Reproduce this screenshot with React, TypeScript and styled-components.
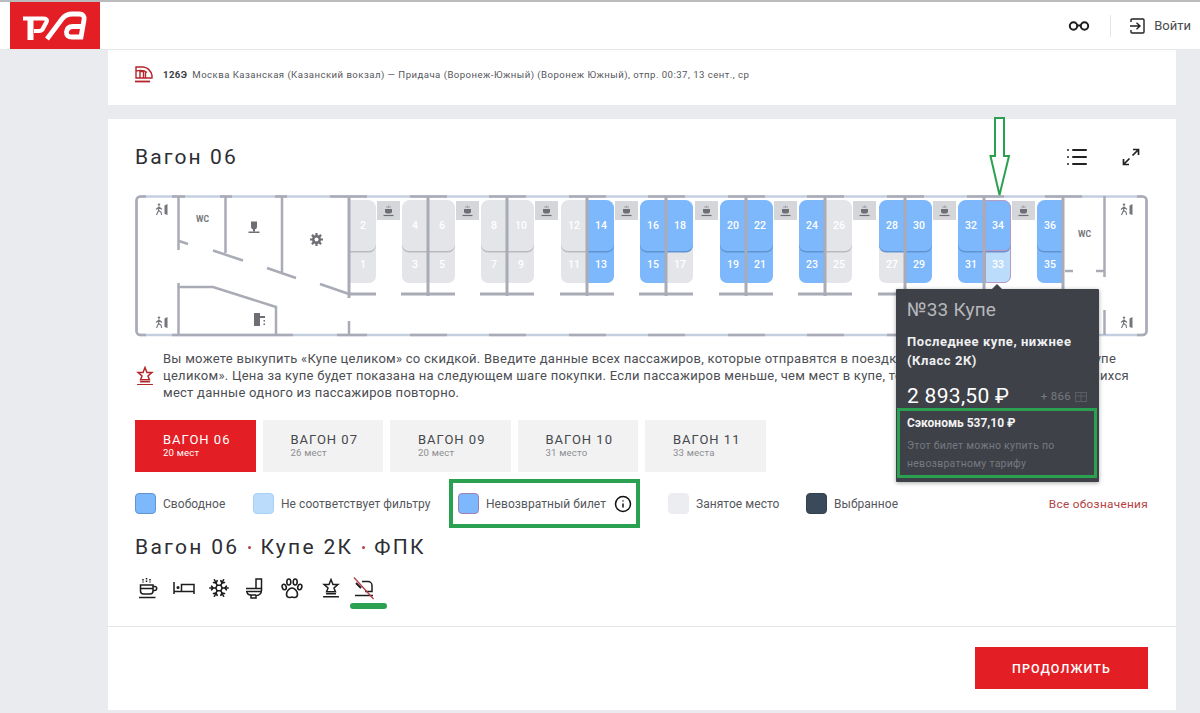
import { Fragment } from 'react'
import styled, { createGlobalStyle } from 'styled-components'
import { Info, List, Snowflake } from 'lucide-react'

const RED = '#e31e24'
const BLUE = '#7cb8fb'
const GREEN = '#2aa150'
const WALL = '#a9abb6'
const RAIL = '#c3cfdf'

type SeatKind = 'free' | 'busy' | 'nonret' | 'light'
type SeatData = { num: number; kind: SeatKind }
type Bay = {
  wall: number
  left?: [SeatData, SeatData]
  right?: [SeatData, SeatData]
}

const s = (num: number, kind: SeatKind): SeatData => ({ num, kind })

const bays: Bay[] = [
  { wall: 349, right: [s(2, 'busy'), s(1, 'busy')] },
  { wall: 428, left: [s(4, 'busy'), s(3, 'busy')], right: [s(6, 'busy'), s(5, 'busy')] },
  { wall: 507, left: [s(8, 'busy'), s(7, 'busy')], right: [s(10, 'busy'), s(9, 'busy')] },
  { wall: 587, left: [s(12, 'busy'), s(11, 'busy')], right: [s(14, 'free'), s(13, 'free')] },
  { wall: 666, left: [s(16, 'free'), s(15, 'free')], right: [s(18, 'free'), s(17, 'busy')] },
  { wall: 746, left: [s(20, 'free'), s(19, 'free')], right: [s(22, 'free'), s(21, 'free')] },
  { wall: 825, left: [s(24, 'free'), s(23, 'free')], right: [s(26, 'busy'), s(25, 'busy')] },
  { wall: 905, left: [s(28, 'free'), s(27, 'busy')], right: [s(30, 'free'), s(29, 'free')] },
  { wall: 984, left: [s(32, 'free'), s(31, 'free')], right: [s(34, 'nonret'), s(33, 'light')] },
  { wall: 1063, left: [s(36, 'free'), s(35, 'free')] },
]

const coffeeSpots = [377, 456, 535, 615, 695, 774, 853, 933, 1012]
const railSegments = [330, 410, 489, 569, 648, 728, 807, 887, 967, 1045]

const tabs = [
  { title: 'ВАГОН 06', sub: '20 мест', active: true },
  { title: 'ВАГОН 07', sub: '26 мест' },
  { title: 'ВАГОН 09', sub: '20 мест' },
  { title: 'ВАГОН 10', sub: '31 место' },
  { title: 'ВАГОН 11', sub: '33 места' },
]

const GlobalStyle = createGlobalStyle`
  html, body {
    margin: 0;
    padding: 0;
    height: 713px;
    overflow: hidden;
    background: #e9ebee;
    font-family: Roboto, "Liberation Sans", sans-serif;
    color: #45474c;
  }
  * { box-sizing: border-box; }
`

const Page = styled.div`
  width: 1200px;
  height: 713px;
  display: flex;
  flex-direction: column;
  border-top: 2px solid #b9bbbd;
`

const Header = styled.header`
  height: 48px;
  flex: none;
  display: flex;
  align-items: stretch;
  justify-content: space-between;
  background: #fff;
  border-bottom: 1px solid #e6e7e9;
  padding-left: 10px;
`

const Logo = styled.div`
  width: 90px;
  height: 47px;
  background: ${RED};
  svg { display: block; }
`

const HeaderTools = styled.div`
  display: flex;
  align-items: center;
  padding-right: 9px;
`

const ToolDivider = styled.span`
  width: 1px;
  height: 22px;
  background: #e4e5e7;
  margin: 0 19px 0 20px;
`

const LoginLabel = styled.span`
  font-size: 13px;
  color: #4a4c50;
  margin-left: 9px;
`

const Main = styled.main`
  width: 1068px;
  margin-left: 108px;
  display: flex;
  flex-direction: column;
  gap: 14px;
`

const RouteCard = styled.section`
  height: 55px;
  background: #fff;
  padding: 0 27px 6px;
  display: flex;
  align-items: center;
  gap: 10px;
  font-size: 9.6px;
  letter-spacing: 0.46px;
  color: #55575c;
  white-space: nowrap;
`

const TrainNumber = styled.b`
  font-weight: 700;
  margin-right: 5px;
  letter-spacing: 0.4px;
  color: #3b3d42;
`

const WagonCard = styled.section`
  height: 591px;
  background: #fff;
  display: flex;
  flex-direction: column;
`

const CardBody = styled.div`
  flex: 1;
  padding: 0 28px 0 27px;
`

const TitleRow = styled.div`
  height: 76px;
  display: flex;
  align-items: center;
  justify-content: space-between;
  padding: 0 8px 0 0;
`

const Title = styled.h1`
  margin: 0;
  font-size: 21px;
  font-weight: 400;
  letter-spacing: 2.1px;
  color: #2c2e33;
`

const TitleTools = styled.div`
  display: flex;
  align-items: center;
  gap: 33px;
  color: #222;
`

const Diagram = styled.div`
  position: relative;
  width: 1013px;
  height: 142px;
`

const Walls = styled.svg`
  position: absolute;
  left: 0;
  top: 0;
  z-index: 2;
`

const seatBg: Record<SeatKind, string> = {
  free: BLUE,
  busy: '#e4e5e8',
  nonret: BLUE,
  light: '#bcdcfb',
}

const seatEdge: Record<SeatKind, string> = {
  free: '#5f94d2',
  busy: '#b9bac0',
  nonret: '#6f8fc9',
  light: '#a8c6e8',
}

const Seat = styled.div<{ $x: number; $upper: boolean; $side: 'l' | 'r'; $kind: SeatKind }>`
  position: absolute;
  left: ${p => p.$x - 135}px;
  top: ${p => (p.$upper ? 5 : 46)}px;
  width: 26px;
  height: ${p => (p.$upper ? 51 : 42)}px;
  z-index: ${p => (p.$upper ? 1 : 0)};
  background: ${p => seatBg[p.$kind]};
  color: #fff;
  font-size: 10.5px;
  font-weight: 500;
  display: flex;
  align-items: center;
  justify-content: center;
  padding-top: ${p => (p.$upper ? 0 : 10)}px;
  padding-bottom: ${p => (p.$upper ? 0 : 5)}px;
  border-radius: ${p => {
    if (p.$upper) return p.$side === 'l' ? '8px 0 0 7px' : '0 8px 7px 0'
    return p.$side === 'l' ? '0 0 0 7px' : '0 0 7px 0'
  }};
  box-shadow: ${p => (p.$upper ? `0 1.5px 0 ${seatEdge[p.$kind]}` : 'none')};
  ${p => (p.$kind === 'nonret' || p.$kind === 'light' ? 'outline: 1px solid #b79ac6; outline-offset: -1px;' : '')}
`

const CoffeeBox = styled.div<{ $x: number }>`
  position: absolute;
  left: ${p => p.$x - 135}px;
  top: 6px;
  width: 23px;
  height: 19px;
  background: #d4d6da;
  display: flex;
  align-items: center;
  justify-content: center;
`

const WcLabel = styled.span<{ $x: number; $y: number }>`
  position: absolute;
  left: ${p => p.$x - 135}px;
  top: ${p => p.$y - 195}px;
  font-size: 8.5px;
  font-weight: 700;
  line-height: 10px;
  color: #74767c;
  z-index: 2;
`

const PlacedIcon = styled.svg<{ $x: number; $y: number }>`
  position: absolute;
  left: ${p => p.$x - 135}px;
  top: ${p => p.$y - 195}px;
  z-index: 2;
`

const GreenArrow = styled.svg`
  position: absolute;
  left: 854px;
  top: -78px;
  z-index: 5;
`

const Tooltip = styled.div`
  position: absolute;
  left: 761px;
  top: 94px;
  width: 203px;
  height: 193px;
  background: #3e4148;
  box-shadow: 0 1px 4px rgba(0, 0, 0, 0.35);
  border-radius: 1px;
  padding: 9px 2px 0 1px;
  color: #fff;
  z-index: 6;
  &::before {
    content: '';
    position: absolute;
    left: 96px;
    top: -5px;
    border-left: 5px solid transparent;
    border-right: 5px solid transparent;
    border-bottom: 5px solid #3e4148;
  }
`

const TipHead = styled.div`
  font-size: 19px;
  line-height: 24px;
  color: #b6b8bc;
  padding-left: 10px;
  letter-spacing: 0.2px;
`

const TipPlace = styled.div`
  margin-top: 10px;
  padding-left: 10px;
  font-size: 13px;
  font-weight: 700;
  line-height: 19px;
  letter-spacing: 0.55px;
  color: #eeeff0;
`

const TipPriceRow = styled.div`
  margin-top: 14px;
  height: 24px;
  padding: 0 10px;
  display: flex;
  align-items: center;
  justify-content: space-between;
`

const TipPrice = styled.span`
  font-size: 21px;
  letter-spacing: 0.3px;
  color: #fff;
`

const TipBonus = styled.span`
  display: flex;
  align-items: center;
  gap: 4px;
  font-size: 11.5px;
  letter-spacing: 0.3px;
  color: #777a80;
`

const TipSave = styled.div`
  height: 70px;
  border: 3px solid ${GREEN};
  padding: 3px 7px 0;
`

const TipSaveTitle = styled.div`
  font-size: 12px;
  font-weight: 700;
  line-height: 18px;
  color: #f2f2f3;
`

const TipSaveText = styled.div`
  margin-top: 5px;
  font-size: 10.5px;
  line-height: 17.5px;
  letter-spacing: 0.25px;
  color: #777a80;
`

const Notice = styled.div`
  margin-top: 13px;
  display: flex;
  align-items: center;
  gap: 9px;
  padding-left: 1px;
`

const NoticeText = styled.p`
  margin: 0;
  width: 970px;
  font-size: 13px;
  line-height: 17px;
  letter-spacing: 0.26px;
  color: #4c4e53;
  white-space: nowrap;
`

const Tabs = styled.div`
  margin-top: 19px;
  display: flex;
  gap: 7px;
`

const Tab = styled.div<{ $active?: boolean }>`
  width: 120.5px;
  height: 52px;
  padding: 13px 0 0 28px;
  background: ${p => (p.$active ? RED : '#f2f2f2')};
  color: ${p => (p.$active ? '#fff' : '#45474c')};
`

const TabTitle = styled.div`
  font-size: 13px;
  line-height: 14px;
  letter-spacing: 1px;
`

const TabSub = styled.div<{ $active?: boolean }>`
  font-size: 9.6px;
  line-height: 12px;
  letter-spacing: 0.2px;
  color: ${p => (p.$active ? '#fff' : '#8b8d91')};
`

const Legend = styled.div`
  margin-top: 7px;
  height: 49px;
  display: flex;
  align-items: center;
  font-size: 12px;
  letter-spacing: 0.05px;
  color: #55575c;
  white-space: nowrap;
`

const LegendItem = styled.div<{ $width?: number; $before?: number }>`
  display: flex;
  align-items: center;
  gap: 7px;
  width: ${p => (p.$width ? `${p.$width}px` : 'auto')};
  margin-left: ${p => p.$before ?? 0}px;
  flex: none;
`

const LegendFrame = styled(LegendItem)`
  height: 49px;
  width: 191px;
  border: 4px solid ${GREEN};
  padding-left: 5px;
`

const Swatch = styled.span<{ $bg: string; $edge: string }>`
  width: 21px;
  height: 21px;
  flex: none;
  border-radius: 4px;
  background: ${p => p.$bg};
  border: 1px solid ${p => p.$edge};
`

const LegendLink = styled.span`
  margin-left: auto;
  font-size: 11.8px;
  letter-spacing: 0.3px;
  color: #b3413f;
`

const InfoMark = styled.span`
  display: flex;
  margin-left: 1px;
  color: #111;
`

const SubTitle = styled.h2`
  margin: 5px 0 0;
  font-size: 21px;
  line-height: 28px;
  font-weight: 400;
  letter-spacing: 2.3px;
  color: #2c2e33;
  display: flex;
  gap: 9px;
  align-items: center;
`

const Dot = styled.span`
  width: 3px;
  height: 3px;
  border-radius: 50%;
  background: #b3413f;
`

const Facilities = styled.div`
  margin-top: 14px;
  height: 26px;
  display: flex;
  align-items: center;
  padding-left: 3px;
  color: #1d1d1f;
  position: relative;
`

const FacilitySlot = styled.span<{ $width: number }>`
  width: ${p => p.$width}px;
  flex: none;
  display: flex;
`

const Underline = styled.span`
  position: absolute;
  left: 215px;
  top: 28px;
  width: 37px;
  height: 6px;
  border-radius: 3px;
  background: ${GREEN};
`

const Footer = styled.div`
  height: 84px;
  flex: none;
  border-top: 1px solid #e4e5e7;
  padding: 20px 28px 0 0;
  display: flex;
  justify-content: flex-end;
  align-items: flex-start;
`

const ContinueButton = styled.button`
  width: 173px;
  height: 42px;
  border: none;
  background: ${RED};
  color: #fff;
  font-family: Roboto, sans-serif;
  font-size: 12.5px;
  font-weight: 500;
  letter-spacing: 1.1px;
`

const WalkIcon = ({ x, y }: { x: number; y: number }) => (
  <PlacedIcon $x={x} $y={y} width='13' height='13' viewBox='0 0 13 13' fill='none' stroke='#74767c'>
    <circle cx='4' cy='1.6' r='1.2' fill='#74767c' stroke='none' />
    <path d='M4 3.4 3.5 7.5 1.5 12M3.6 7.5 6 9 6.6 12M4 4 1 6.5M4 4l3 2.5' strokeWidth='1.1' />
    <path d='M9.500 2.500 12.500 1V12L9.500 11z' fill='#74767c' stroke='none' />
  </PlacedIcon>
)

const CoffeeMini = () => (
  <svg width='13' height='12' viewBox='0 0 13 12' fill='none'>
    <path d='M3 4h7v2.4a2 2 0 0 1-2 2H5a2 2 0 0 1-2-2z' fill='#6d6f75' />
    <path d='M1.5 10.5h10' stroke='#6d6f75' strokeWidth='1.2' />
    <path d='M5 1v2M6.5 0.5v2.5M8 1v2' stroke='#8a8c92' strokeWidth='0.7' />
  </svg>
)

const CoffeeIcon = () => (
  <svg width='20' height='22' viewBox='0 0 20 22' fill='none' stroke='currentColor' strokeWidth='1.5'>
    <path d='M2.5 8h12.5v6a3 3 0 0 1-3 3H5.5a3 3 0 0 1-3-3z' />
    <path d='M2.5 11.5h12.5M15 9.5h2a1.7 1.7 0 0 1 1.7 1.7v0A2.3 2.3 0 0 1 16.4 13.500H15' />
    <path d='M1 20.500h16.500' />
    <path d='M5 2v3.500M8.500 1v4.500M12 2v3.500' strokeDasharray='1.500 1' />
  </svg>
)

const BedIcon = () => (
  <svg width='22' height='14' viewBox='0 0 22 14' fill='none' stroke='currentColor' strokeWidth='1.5'>
    <path d='M1 1v12M1 10.500h20M21 13V3.500H8.500v7' />
    <circle cx='5' cy='6.500' r='1.500' fill='currentColor' stroke='none' />
  </svg>
)

const ToiletIcon = () => (
  <svg width='18' height='21' viewBox='0 0 18 21' fill='none' stroke='currentColor' strokeWidth='1.5'>
    <path d='M11 10.500V1h5.500v11.500a5 5 0 0 1-5 5H11V20H6v-3' />
    <path d='M1 10.500h15.500M1 13.500h15M2 13.500c0 2 1.500 3.500 4 3.500h5' />
  </svg>
)

const PawIcon = () => (
  <svg width='22' height='21' viewBox='0 0 22 21' fill='none' stroke='currentColor' strokeWidth='1.6'>
    <ellipse cx='3.200' cy='9' rx='2' ry='2.800' transform='rotate(-15 3.200 9)' />
    <ellipse cx='7.800' cy='4' rx='2' ry='3' />
    <ellipse cx='14.200' cy='4' rx='2' ry='3' />
    <ellipse cx='18.800' cy='9' rx='2' ry='2.800' transform='rotate(15 18.800 9)' />
    <path d='M11 10c-2.600 0-5.500 3.300-5.500 6.200 0 2 1.500 3.300 3.200 3.300 1 0 1.500-.5 2.300-.5s1.300.5 2.300.5c1.700 0 3.200-1.300 3.200-3.300C16.500 13.300 13.600 10 11 10z' />
  </svg>
)

const StarStand = ({ size = 18, color = 'currentColor' }: { size?: number; color?: string }) => (
  <svg width={size} height={size * 1.1} viewBox='0 0 18 20' fill='none' stroke={color} strokeWidth='1.500'>
    <path d='M9 1.500 11 6.500H16L12 10 13.500 14H4.500L6 10 2 6.500H7z' />
    <path d='M4 16h10M1 19h16' />
  </svg>
)

const NoLuggageIcon = () => (
  <svg width='22' height='23' viewBox='0 0 22 23' fill='none' stroke='#1d1d1f' strokeWidth='1.500'>
    <path d='M9 4.500h6a4 4 0 0 1 4 4v6h-7M2 18.500h18' />
    <path d='M3 6l5 5' strokeWidth='2' />
    <path d='M1 0.500 20.500 22' stroke='#b2434c' strokeWidth='1.400' />
  </svg>
)

const ExpandIcon = () => (
  <svg width='18' height='18' viewBox='0 0 18 18' fill='none' stroke='currentColor' strokeWidth='1.700'>
    <path d='M11 1.500h5.500V7M16 2l-5.500 5.500M7 16.500H1.500V11M2 16l5.500-5.500' />
  </svg>
)

const GlassesIcon = () => (
  <svg width='22' height='10' viewBox='0 0 22 10' fill='none' stroke='#1d1d1f' strokeWidth='2'>
    <circle cx='5.500' cy='5' r='3.700' />
    <circle cx='16.500' cy='5' r='3.700' />
    <path d='M9 4.500h4' />
  </svg>
)

const LoginIcon = () => (
  <svg width='15' height='16' viewBox='0 0 15 16' fill='none' stroke='#222' strokeWidth='1.400'>
    <path d='M1 4V2a1 1 0 0 1 1-1h11a1 1 0 0 1 1 1v12a1 1 0 0 1-1 1H2a1 1 0 0 1-1-1v-2' />
    <path d='M0 8h9.500M6.500 4.800 10 8 6.500 11.200' />
  </svg>
)

const TrainIcon = () => (
  <svg width='18' height='17' viewBox='0 0 18 17' fill='none' stroke='#b3262b' strokeWidth='1.400'>
    <path d='M1 12V1h7c4 0 8 3.500 9 8.500V12z' />
    <path d='M5 12V5.500h3.500V12M10.500 12V6.500M1 5c4-1 8-1 11 1.500' />
    <path d='M0 15.500h15' strokeWidth='1.800' />
  </svg>
)

const GiftIcon = () => (
  <svg width='12' height='12' viewBox='0 0 12 12' fill='none' stroke='#5b5e65' strokeWidth='1'>
    <rect x='0.500' y='2.500' width='11' height='9' />
    <path d='M0.500 6h11M6 2.500v9' />
  </svg>
)

const RzdMark = () => (
  <svg width='90' height='47' viewBox='0 0 90 47' fill='none' stroke='#fff'>
    <path d='M13 16.500H33Q38 16.500 36.500 20L33 26.500Q32 29 29 29H24' strokeWidth='4.200' />
    <path d='M20.500 16V38' strokeWidth='6' />
    <path
      d='M37 37 52 17Q56 12 62 12H69Q75 12 74 18L71 35H62Q56 35 56.500 30Q57 24.500 63 24.500H72'
      strokeWidth='4.800'
    />
  </svg>
)

const PlanWalls = () => (
  <Walls width='1013' height='142' viewBox='135 195 1013 142' fill='none' strokeLinecap='butt'>
    <rect x='136.500' y='196.500' width='1010' height='138.500' rx='4' stroke={RAIL} strokeWidth='2.500' />
    <path
      d='M146 196.500H140.500a4 4 0 0 0-4 4V331a4 4 0 0 0 4 4H146M1137 196.500H1142.500a4 4 0 0 1 4 4V331a4 4 0 0 1-4 4H1137'
      stroke={WALL}
      strokeWidth='2.500'
    />
    <g stroke={WALL} strokeWidth='2.500'>
      <path d='M172 196.500h13M220 196.500h12M275 196.500h12M172 335H293M337 335h30' />
      {railSegments.map(x => (
        <Fragment key={x}>
          <path d={`M${x} 196.500h37`} />
          {x > 400 && <path d={`M${x} 335h37`} />}
        </Fragment>
      ))}
      <path d='M178.500 196V250M179 241l9 3M225.500 196V253M213 250.500l30 10M282 196V272M267 268l29 10M320 284l29 10' />
      <path d='M178.500 283V335M179 287H213L276 307V335M349 321V335' />
      <path d='M1104.500 196V277M1065 271h8M1096 271h9M1104.500 310V335' />
    </g>
    <g stroke={WALL} strokeWidth='3'>
      {bays.map(b => (
        <path
          key={b.wall}
          d={`M${b.wall} 196V${b.wall === 349 ? 298 : b.wall === 1063 ? 290 : 296}`}
        />
      ))}
      {bays.slice(1, 9).map(b => (
        <path key={b.wall} d={`M${b.wall - 27} 294h54`} />
      ))}
      <path d='M349 294h27M1036 294h27' />
    </g>
  </Walls>
)

const PlanIcons = () => (
  <>
    <WalkIcon x={155} y={203} />
    <WalkIcon x={155} y={316} />
    <WalkIcon x={1120} y={203} />
    <WalkIcon x={1120} y={316} />
    <WcLabel $x={196} $y={214}>WC</WcLabel>
    <WcLabel $x={1078} $y={229}>WC</WcLabel>
    <PlacedIcon $x={248} $y={221} width='12' height='12' viewBox='0 0 12 12' fill='#6d6f75'>
      <path d='M3 0.500h6v5a3 3 0 0 1-6 0zM0.500 10.500h11V12H0.500z' />
      <path d='M5 8h2v2.500H5z' />
    </PlacedIcon>
    <PlacedIcon $x={310} $y={233} width='13' height='13' viewBox='0 0 13 13' fill='#6d6f75'>
      <path d='M6.500 0v13M0 6.500h13M1.900 1.900l9.200 9.200M11.100 1.900l-9.200 9.200' stroke='#6d6f75' strokeWidth='2.200' />
      <circle cx='6.500' cy='6.500' r='4.500' />
      <circle cx='6.500' cy='6.500' r='2' fill='#fff' />
    </PlacedIcon>
    <PlacedIcon $x={254} $y={313} width='12' height='13' viewBox='0 0 12 13' fill='#6d6f75'>
      <path d='M0 0h6v3h5v2H6v8H0z' />
      <path d='M9.500 7h1.500v1.500H9.500zM9.500 10.500h1.500V12H9.500z' />
    </PlacedIcon>
  </>
)

const renderSeats = (b: Bay) => (
  <Fragment key={b.wall}>
    {b.left && (
      <>
        <Seat $x={b.wall - 26} $upper $side='l' $kind={b.left[0].kind}>{b.left[0].num}</Seat>
        <Seat $x={b.wall - 26} $upper={false} $side='l' $kind={b.left[1].kind}>{b.left[1].num}</Seat>
      </>
    )}
    {b.right && (
      <>
        <Seat $x={b.wall + 1} $upper $side='r' $kind={b.right[0].kind}>{b.right[0].num}</Seat>
        <Seat $x={b.wall + 1} $upper={false} $side='r' $kind={b.right[1].kind}>{b.right[1].num}</Seat>
      </>
    )}
  </Fragment>
)

export default function App() {
  return (
    <Page>
      <GlobalStyle />
      <Header>
        <Logo>
          <RzdMark />
        </Logo>
        <HeaderTools>
          <GlassesIcon />
          <ToolDivider />
          <LoginIcon />
          <LoginLabel>Войти</LoginLabel>
        </HeaderTools>
      </Header>
      <Main>
        <RouteCard>
          <TrainIcon />
          <span>
            <TrainNumber>126Э</TrainNumber>
            Москва Казанская (Казанский вокзал) — Придача (Воронеж-Южный) (Воронеж Южный), отпр. 00:37, 13 сент., ср
          </span>
        </RouteCard>
        <WagonCard>
          <CardBody>
            <TitleRow>
              <Title>Вагон 06</Title>
              <TitleTools>
                <List size={24} strokeWidth={2} />
                <ExpandIcon />
              </TitleTools>
            </TitleRow>
            <Diagram>
              {bays.map(renderSeats)}
              {coffeeSpots.map(x => (
                <CoffeeBox key={x} $x={x}>
                  <CoffeeMini />
                </CoffeeBox>
              ))}
              <PlanWalls />
              <PlanIcons />
              <GreenArrow width='22' height='80' viewBox='0 0 22 80' fill='#fff' stroke={GREEN} strokeWidth='2'>
                <path d='M6 1h9v38h5L10.500 78 1.500 39h4.500z' />
              </GreenArrow>
              <Tooltip>
                <TipHead>№33 Купе</TipHead>
                <TipPlace>
                  Последнее купе, нижнее
                  <br />
                  (Класс 2К)
                </TipPlace>
                <TipPriceRow>
                  <TipPrice>2 893,50 ₽</TipPrice>
                  <TipBonus>
                    + 866
                    <GiftIcon />
                  </TipBonus>
                </TipPriceRow>
                <TipSave>
                  <TipSaveTitle>Сэкономь 537,10 ₽</TipSaveTitle>
                  <TipSaveText>
                    Этот билет можно купить по
                    <br />
                    невозвратному тарифу
                  </TipSaveText>
                </TipSave>
              </Tooltip>
            </Diagram>
            <Notice>
              <StarStand size={18} color='#b3262b' />
              <NoticeText>
                Вы можете выкупить «Купе целиком» со скидкой. Введите данные всех пассажиров, которые отправятся в поездку, а затем выберите вариант «Купе
                <br />
                целиком». Цена за купе будет показана на следующем шаге покупки. Если пассажиров меньше, чем мест в купе, то вы можете ввести для оставшихся
                <br />
                мест данные одного из пассажиров повторно.
              </NoticeText>
            </Notice>
            <Tabs>
              {tabs.map(t => (
                <Tab key={t.title} $active={t.active}>
                  <TabTitle>{t.title}</TabTitle>
                  <TabSub $active={t.active}>{t.sub}</TabSub>
                </Tab>
              ))}
            </Tabs>
            <Legend>
              <LegendItem $width={118}>
                <Swatch $bg={BLUE} $edge='#5f94d2' />
                Свободное
              </LegendItem>
              <LegendItem $width={196}>
                <Swatch $bg='#bcdcfb' $edge='#a8d0f6' />
                Не соответствует фильтру
              </LegendItem>
              <LegendFrame>
                <Swatch $bg={BLUE} $edge='#a080b4' />
                Невозвратный билет
                <InfoMark>
                  <Info size={18} strokeWidth={2} />
                </InfoMark>
              </LegendFrame>
              <LegendItem $width={138} $before={28}>
                <Swatch $bg='#ecedf0' $edge='#ecedf0' />
                Занятое место
              </LegendItem>
              <LegendItem>
                <Swatch $bg='#3b4a5a' $edge='#33404e' />
                Выбранное
              </LegendItem>
              <LegendLink>Все обозначения</LegendLink>
            </Legend>
            <SubTitle>
              Вагон 06
              <Dot />
              Купе 2К
              <Dot />
              ФПК
            </SubTitle>
            <Facilities>
              <FacilitySlot $width={35}><CoffeeIcon /></FacilitySlot>
              <FacilitySlot $width={35}><BedIcon /></FacilitySlot>
              <FacilitySlot $width={37}><Snowflake size={22} strokeWidth={1.8} /></FacilitySlot>
              <FacilitySlot $width={36}><ToiletIcon /></FacilitySlot>
              <FacilitySlot $width={41}><PawIcon /></FacilitySlot>
              <FacilitySlot $width={31}><StarStand size={18} /></FacilitySlot>
              <FacilitySlot $width={24}><NoLuggageIcon /></FacilitySlot>
              <Underline />
            </Facilities>
          </CardBody>
          <Footer>
            <ContinueButton>ПРОДОЛЖИТЬ</ContinueButton>
          </Footer>
        </WagonCard>
      </Main>
    </Page>
  )
}
